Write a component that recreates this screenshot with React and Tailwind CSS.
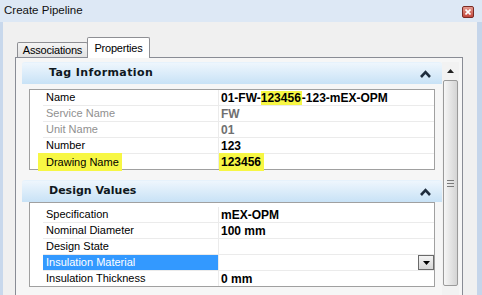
import React from "react"

const sans = "font-['Liberation_Sans',Arial,sans-serif]"

function Chevron() {
    return (
        <svg width="11" height="8" viewBox="0 0 11 8" className="mr-[11px]">
            <polyline points="1,7 5.5,2.2 10,7" fill="none" stroke="#1f2d3d" strokeWidth="2.6" />
        </svg>
    )
}

function SectionHeader({ title, wide }) {
    return (
        <div className="flex items-center justify-between h-[22px] rounded-t-[3px] border-t border-[#e6f2fc] bg-gradient-to-b from-[#eef6fd] to-[#c8e2f6]">
            <span className={`pl-[27px] font-['DejaVu_Sans',sans-serif] font-bold text-[11px] text-[#101820] ${wide ? "tracking-[0.4px]" : ""}`}>{title}</span>
            <Chevron />
        </div>
    )
}

function Hl({ children, className = "" }) {
    return <span className={`bg-[#f7f744] ${className}`}>{children}</span>
}

function Row({ label, value, muted, selected, dropdown, last }) {
    const sep = last ? "h-[15px]" : "h-[16px] border-b border-[#ebebeb]"
    return (
        <div className="flex h-[16px] last:h-[15px]">
            <div className="w-[13px] shrink-0" />
            <div className={`w-[175px] shrink-0 flex items-center pl-[3px] text-[11px] ${sep} ${selected ? "bg-[#3399ff] text-white" : muted ? "text-[#909090]" : "text-black"}`}>
                {label}
            </div>
            <div className={`flex-1 flex items-center justify-between border-l border-[#ebebeb] pl-[2px] font-bold text-[12px] ${sep} ${muted ? "text-[#707070]" : "text-black"}`}>
                <span className="whitespace-nowrap">{value}</span>
                {dropdown && (
                    <div className="w-[16px] h-[15px] border border-[#6a6a6a] bg-gradient-to-b from-[#f4f4f4] to-[#d6d6d6] flex items-center justify-center">
                        <svg width="7" height="4" viewBox="0 0 7 4"><polygon points="0,0 7,0 3.5,4" fill="#000" /></svg>
                    </div>
                )}
            </div>
        </div>
    )
}

export default function App() {
    return (
        <div className={`w-[482px] h-[295px] overflow-hidden bg-[#f0f0f0] ${sans}`}>
            <div className="flex items-center justify-between h-[22px] bg-[#dde8f5] pl-[4px] pr-[8px]">
                <span className="text-[11.5px] text-[#111]">Create Pipeline</span>
                <div className="w-[12px] h-[12px] mt-[1px] rounded-[2px] border border-[#7a2b24] bg-gradient-to-b from-[#e49a90] to-[#c2453b] flex items-center justify-center">
                    <svg width="6" height="6" viewBox="0 0 6 6"><path d="M0.5 0.5 L5.5 5.5 M5.5 0.5 L0.5 5.5" stroke="#fff" strokeWidth="1.6" /></svg>
                </div>
            </div>
            <div className="flex h-[273px]">
                <div className="w-[3px] bg-[#c8d8ec]" />
                <div className="flex-1 flex flex-col">
                    <div className="flex items-end h-[35px] pl-[14px] relative z-10">
                        <div className="h-[15px] w-[71px] border border-b-0 border-[#8e8f94] rounded-t-[2px] bg-gradient-to-b from-[#f4f4f4] to-[#e2e2e2] flex items-center justify-center text-[11px] tracking-[-0.2px] text-black">
                            Associations
                        </div>
                        <div className="h-[21px] w-[63px] -ml-px -mb-px border border-b-0 border-[#8e8f94] rounded-t-[2px] bg-white flex items-start justify-center pt-[2px] text-[11px] tracking-[-0.2px] text-black">
                            Properties
                        </div>
                    </div>
                    <div className="ml-[12px] w-[448px] flex-1 border border-b-0 border-[#898c95] bg-[#f6f6f6] flex pt-[4px] pl-[6px]">
                        <div className="w-[420px] shrink-0">
                            <SectionHeader title="Tag Information" wide />
                            <div className="mx-[7px] mt-[5px] border border-[#a0a0a0] bg-white">
                                <Row label="Name" value={<>01-FW-<Hl className="pr-[1px]">123456</Hl>-123-mEX-OPM</>} />
                                <Row label="Service Name" value="FW" muted />
                                <Row label="Unit Name" value="01" muted />
                                <Row label="Number" value="123" />
                                <Row
                                    last
                                    label={<Hl className="-ml-[8px] pl-[8px] pr-[3px] leading-[18px] inline-block">Drawing Name</Hl>}
                                    value={<Hl className="-ml-[2px] pl-[2px] pr-[3px] leading-[18px] inline-block">123456</Hl>}
                                />
                            </div>
                            <div className="mt-[10px]">
                                <SectionHeader title="Design Values" />
                            </div>
                            <div className="mx-[7px] border border-[#a0a0a0] bg-white pt-[4px]">
                                <Row label="Specification" value="mEX-OPM" />
                                <Row label="Nominal Diameter" value="100 mm" />
                                <Row label="Design State" value="" />
                                <Row label="Insulation Material" value="" selected dropdown />
                                <Row last label="Insulation Thickness" value="0 mm" />
                            </div>
                        </div>
                        <div className="w-[17px] shrink-0 flex flex-col bg-[#f2f2f2]">
                            <div className="h-[18px] flex items-center justify-center">
                                <svg width="7" height="4" viewBox="0 0 7 4"><polygon points="3.5,0 7,4 0,4" fill="#222" /></svg>
                            </div>
                            <div className="mx-[1px] h-[206px] rounded-[2px] border border-[#9a9a9a] bg-gradient-to-r from-[#f6f6f6] to-[#d4d4d4] flex flex-col items-center justify-center gap-[2px]">
                                <div className="w-[7px] h-px bg-[#7a7a7a]" />
                                <div className="w-[7px] h-px bg-[#7a7a7a]" />
                                <div className="w-[7px] h-px bg-[#7a7a7a]" />
                            </div>
                        </div>
                    </div>
                </div>
                <div className="w-[5px] bg-[#c5d5ea]" />
            </div>
        </div>
    )
}
